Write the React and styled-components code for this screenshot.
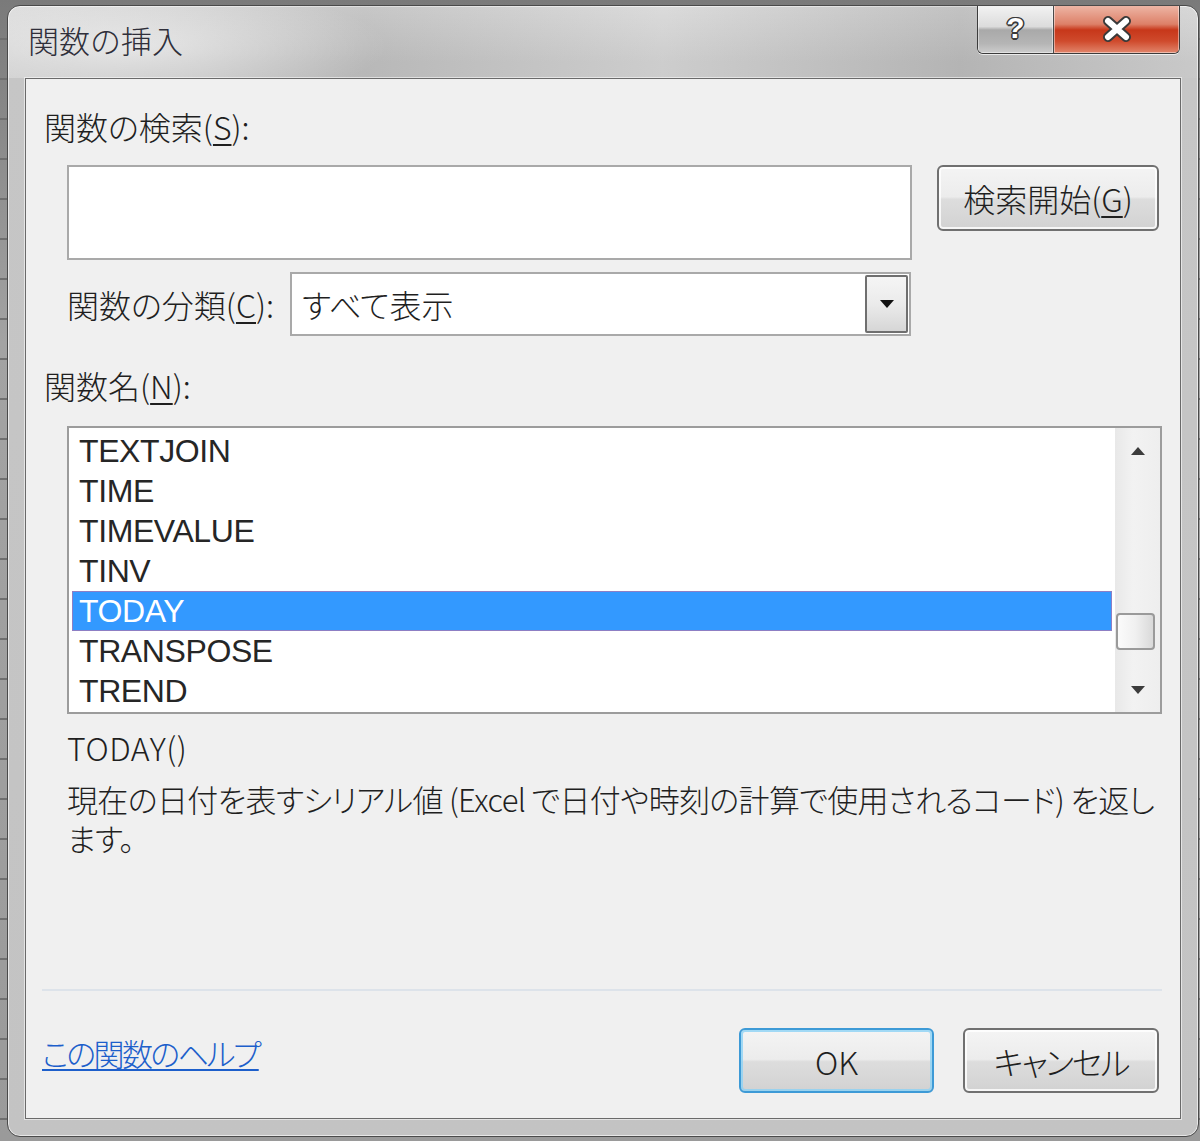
import React from 'react';
import styled, { createGlobalStyle } from 'styled-components';

const JP = `"Noto Sans CJK JP", "Noto Sans", sans-serif`;
const LATIN = `"Liberation Sans", "Noto Sans CJK JP", sans-serif`;

const GlobalStyle = createGlobalStyle`
  html, body {
    margin: 0;
    padding: 0;
  }

  body {
    width: 1200px;
    height: 1141px;
    overflow: hidden;
    background: #8f8f8f;
  }
`;

const Desktop = styled.div`
  width: 1200px;
  height: 1141px;
  box-sizing: border-box;
  padding: 5px 1px 4px 7px;
  display: flex;
  background:
    repeating-linear-gradient(180deg, transparent 0 38px, #6f6f6f 38px 40px),
    linear-gradient(180deg, #7a7a7a 0%, #a3a3a3 30%, #9a9a9a 100%);
`;

const Window = styled.div`
  flex: 1;
  display: flex;
  flex-direction: column;
  border: 1px solid #4a4a4a;
  border-radius: 13px;
  overflow: hidden;
  background: linear-gradient(180deg, #d6d6d6 0%, #c6c6c6 5%, #c3c3c3 100%);
  box-shadow: inset 0 0 0 1px rgba(255, 255, 255, 0.6);
`;

const TitleBar = styled.div`
  height: 72px;
  flex: none;
  display: flex;
  align-items: flex-start;
  justify-content: space-between;
  padding: 0 18px 0 20px;
  background:
    radial-gradient(ellipse 260px 60px at 120px 40px, rgba(255, 255, 255, 0.55), transparent),
    linear-gradient(90deg, rgba(255, 255, 255, 0.1) 0%, rgba(0, 0, 0, 0.07) 30%, rgba(255, 255, 255, 0.12) 55%, rgba(0, 0, 0, 0.09) 80%, rgba(255, 255, 255, 0.05) 100%);
`;

const Title = styled.h1`
  margin: 0;
  align-self: center;
  margin-top: -4px;
  font: 300 31px/40px ${JP};
  color: #2f2f3a;
`;

const CaptionGroup = styled.div`
  display: flex;
  margin-top: -1px;
  border: 1px solid #3c3c3c;
  border-top: none;
  border-radius: 0 0 6px 6px;
  overflow: hidden;
  box-shadow: 0 1px 0 rgba(255, 255, 255, 0.7);
`;

const CaptionButton = styled.div`
  width: ${(p) => p.$width}px;
  height: 48px;
  display: flex;
  align-items: center;
  justify-content: center;
  box-shadow: inset 0 0 0 1px rgba(255, 255, 255, 0.45);
  background: ${(p) =>
    p.$close
      ? 'linear-gradient(180deg, #eeb8a8 0%, #dd8068 40%, #c7371a 52%, #cf4a2c 75%, #e2866c 100%)'
      : 'linear-gradient(180deg, #f3f3f3 0%, #dcdcdc 45%, #a9a9a9 52%, #b5b5b5 80%, #cdcdcd 100%)'};

  & + & {
    border-left: 1px solid #4a4a4a;
  }
`;

const HelpGlyph = styled.span`
  font: 700 30px/1 ${LATIN};
  color: #fff;
  margin-top: -2px;
  text-shadow:
    -1.5px 0 #3a3a3a,
    1.5px 0 #3a3a3a,
    0 -1.5px #3a3a3a,
    0 1.5px #3a3a3a,
    -1px -1px #3a3a3a,
    1px 1px #3a3a3a,
    1px -1px #3a3a3a,
    -1px 1px #3a3a3a;
`;

const Client = styled.div`
  flex: 1;
  display: flex;
  flex-direction: column;
  margin: 0 17px 17px 17px;
  padding: 27px 18px 25px 18px;
  border: 1px solid #6a6a6a;
  background: #f0f0f0;
  box-shadow: 0 0 0 1px rgba(255, 255, 255, 0.55);
  color: #1f1f1f;
  font-family: ${JP};
  font-weight: 300;
  font-feature-settings: 'palt';
`;

const Label = styled.div`
  font-size: 32px;
  line-height: 40px;
  white-space: nowrap;
  margin-top: ${(p) => p.$top || 0}px;
`;

const AccessKey = styled.span`
  text-decoration: underline;
  text-decoration-thickness: 2px;
  text-underline-offset: 4px;
`;

const Indented = styled.div`
  padding-left: 23px;
  margin-top: ${(p) => p.$top || 0}px;
`;

const SearchRow = styled.div`
  display: flex;
  align-items: flex-start;
  gap: 25px;
`;

const SearchBox = styled.div`
  width: 845px;
  height: 95px;
  box-sizing: border-box;
  border: 2px solid #a9a9a9;
  background: #fff;
`;

const PushButton = styled.div`
  width: ${(p) => p.$width}px;
  height: ${(p) => p.$height}px;
  box-sizing: border-box;
  display: flex;
  align-items: center;
  justify-content: center;
  border: 2px solid ${(p) => (p.$focused ? '#3d9ad6' : '#707070')};
  border-radius: 6px;
  font-size: 32px;
  letter-spacing: ${(p) => p.$tracking || 0}px;
  color: #1f1f1f;
  background: linear-gradient(180deg, #f4f4f4 0%, #ececec 48%, #dddddd 52%, #d2d2d2 100%);
  box-shadow: inset 0 0 0 2px ${(p) => (p.$focused ? 'rgba(140, 210, 245, 0.8)' : 'rgba(255, 255, 255, 0.8)')};
  white-space: nowrap;
`;

const CategoryRow = styled.div`
  display: grid;
  grid-template-columns: 223px 621px;
  align-items: center;
  margin-top: 12px;
`;

const Select = styled.div`
  height: 64px;
  box-sizing: border-box;
  display: flex;
  align-items: center;
  justify-content: space-between;
  border: 2px solid #a9a9a9;
  background: #fff;
  padding: 0 1px 0 10px;
  font-size: 32px;
`;

const DropButton = styled.div`
  width: 43px;
  height: 58px;
  box-sizing: border-box;
  display: flex;
  align-items: center;
  justify-content: center;
  border: 2px solid #6f6f6f;
  border-radius: 2px;
  background: linear-gradient(180deg, #f5f5f5 0%, #ebebeb 50%, #d6d6d6 100%);
`;

const ListBox = styled.div`
  display: flex;
  height: 288px;
  box-sizing: border-box;
  border: 2px solid #9c9c9c;
  background: #fff;
`;

const Items = styled.div`
  flex: 1;
  padding: 3px 3px 0 3px;
  overflow: hidden;
`;

const Item = styled.div`
  height: 40px;
  box-sizing: border-box;
  padding-left: 6px;
  font: 400 32px/38px ${LATIN};
  letter-spacing: -0.4px;
  color: ${(p) => (p.$selected ? '#fff' : '#262626')};
  background: ${(p) => (p.$selected ? '#3399ff' : 'transparent')};
  border: 1px solid ${(p) => (p.$selected ? '#8d7fc4' : 'transparent')};
`;

const ScrollBar = styled.div`
  width: 45px;
  display: flex;
  flex-direction: column;
  background: linear-gradient(90deg, #e8e8e8 0%, #f2f2f2 40%, #eeeeee 100%);
`;

const ScrollArrow = styled.div`
  height: 45px;
  flex: none;
  display: flex;
  align-items: center;
  justify-content: center;
`;

const Track = styled.div`
  flex: 1;
  padding-top: ${(p) => p.$offset}px;
`;

const Thumb = styled.div`
  width: 39px;
  height: 37px;
  margin-left: 1px;
  box-sizing: border-box;
  border: 2px solid #9a9a9a;
  border-radius: 4px;
  background: linear-gradient(90deg, #fbfbfb 0%, #f0f0f0 50%, #d9d9d9 100%);
`;

const Syntax = styled.div`
  margin-top: 13px;
  font-size: 32px;
  line-height: 40px;
  letter-spacing: 0.5px;
`;

const Description = styled.div`
  margin-top: 12px;
  font-size: 31px;
  line-height: 39px;
  white-space: nowrap;
  letter-spacing: -0.65px;
`;

const Spacer = styled.div`
  flex: 1;
`;

const Separator = styled.div`
  margin: 0 0 0 -2px;
  border-top: 2px solid #dde3ea;
`;

const Footer = styled.div`
  display: flex;
  align-items: flex-start;
  justify-content: space-between;
  margin: 37px 3px 0 -2px;
`;

const HelpLink = styled.a`
  margin-top: 5px;
  font-size: 31px;
  line-height: 40px;
  color: #1d5fcb;
  text-decoration: underline;
  text-decoration-thickness: 2px;
  text-underline-offset: 3px;
  letter-spacing: -2.6px;
`;

const FooterButtons = styled.div`
  display: flex;
  gap: 29px;
`;

const Triangle = ({ dir = 'down', width = 14, height = 8, color = '#111' }) => (
  <svg width={width} height={height} viewBox="0 0 14 8">
    <polygon points={dir === 'down' ? '0,0 14,0 7,8' : '0,8 14,8 7,0'} fill={color} />
  </svg>
);

const CloseGlyph = () => (
  <svg width="30" height="26" viewBox="0 0 30 26">
    <path d="M6 5 L24 21 M24 5 L6 21" stroke="#3a3a3a" strokeWidth="10" strokeLinecap="round" />
    <path d="M6 5 L24 21 M24 5 L6 21" stroke="#fff" strokeWidth="6" strokeLinecap="round" />
  </svg>
);

const functions = ['TEXTJOIN', 'TIME', 'TIMEVALUE', 'TINV', 'TODAY', 'TRANSPOSE', 'TREND'];

const App = () => (
  <Desktop>
    <GlobalStyle />
    <Window>
      <TitleBar>
        <Title>関数の挿入</Title>
        <CaptionGroup>
          <CaptionButton $width={75}>
            <HelpGlyph>?</HelpGlyph>
          </CaptionButton>
          <CaptionButton $width={125} $close>
            <CloseGlyph />
          </CaptionButton>
        </CaptionGroup>
      </TitleBar>

      <Client>
        <Label>
          関数の検索(<AccessKey>S</AccessKey>):
        </Label>

        <Indented $top={19}>
          <SearchRow>
            <SearchBox />
            <PushButton $width={222} $height={66}>
              検索開始(<AccessKey>G</AccessKey>)
            </PushButton>
          </SearchRow>

          <CategoryRow>
            <Label>
              関数の分類(<AccessKey>C</AccessKey>):
            </Label>
            <Select>
              すべて表示
              <DropButton>
                <Triangle />
              </DropButton>
            </Select>
          </CategoryRow>
        </Indented>

        <Label $top={29}>
          関数名(<AccessKey>N</AccessKey>):
        </Label>

        <Indented $top={21}>
          <ListBox>
            <Items>
              {functions.map((name) => (
                <Item key={name} $selected={name === 'TODAY'}>
                  {name}
                </Item>
              ))}
            </Items>
            <ScrollBar>
              <ScrollArrow>
                <Triangle dir="up" color="#3c3c3c" />
              </ScrollArrow>
              <Track $offset={140}>
                <Thumb />
              </Track>
              <ScrollArrow>
                <Triangle color="#3c3c3c" />
              </ScrollArrow>
            </ScrollBar>
          </ListBox>

          <Syntax>TODAY()</Syntax>
          <Description>
            現在の日付を表すシリアル値 (Excel で日付や時刻の計算で使用されるコード) を返し
            <br />
            ます。
          </Description>
        </Indented>

        <Spacer />
        <Separator />

        <Footer>
          <HelpLink href="#">この関数のヘルプ</HelpLink>
          <FooterButtons>
            <PushButton $width={195} $height={65} $focused>
              OK
            </PushButton>
            <PushButton $width={196} $height={65} $tracking={-2}>
              キャンセル
            </PushButton>
          </FooterButtons>
        </Footer>
      </Client>
    </Window>
  </Desktop>
);

export default App;
